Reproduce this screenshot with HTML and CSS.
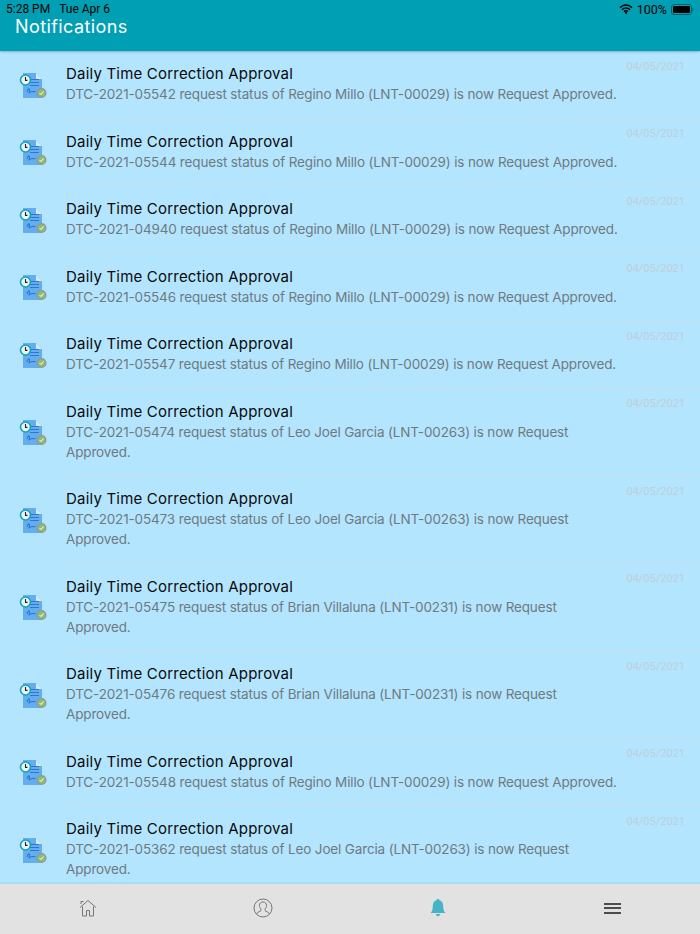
FILE: index.html
```html
<!DOCTYPE html>
<html lang="en">
<head>
  <meta charset="UTF-8">
  <meta name="viewport" content="width=device-width, initial-scale=1.0">
  <title>Notifications</title>
  <link rel="stylesheet" href="styles.css">
</head>
<body>
  <svg class="defs" width="0" height="0">
    <symbol id="doc-icon" viewBox="0 0 28 28">
      <path d="M4 2h13l6 6v19H4z" fill="#64aef0"/>
      <path d="M17 2l6 6h-6z" fill="#d6ecfb"/>
      <path d="M11 8.500h9M11 11.500h9M11 14.500h9" stroke="#2a78d0" stroke-width="1.200"/>
      <circle cx="6.500" cy="9" r="5" fill="#eef3f5" stroke="#12a3b8" stroke-width="1.600"/>
      <path d="M6.500 6v3.400h2" fill="none" stroke="#222" stroke-width="1.100"/>
      <path d="M8 21c1-4 3-4 2.500-1s-1 2 1 1 1 0 5-.5" fill="none" stroke="#2a78d0" stroke-width="1.100"/>
      <circle cx="22.500" cy="22" r="4.300" fill="#8fbf6a" stroke="#8f9a9e" stroke-width="1.500"/>
      <path d="M20.500 22l1.500 1.500 2.500-3" fill="none" stroke="#fff" stroke-width="1"/>
    </symbol>
  </svg>

  <div class="app">
    <header class="topbar">
      <div class="status">
        <span class="status-time">5:28 PM</span>
        <span class="status-date">Tue Apr 6</span>
        <span class="status-right">
          <svg width="14" height="10" viewBox="0 0 14 10">
            <path d="M1 3.600a8.500 8.500 0 0 1 12 0M3 5.700a5.600 5.600 0 0 1 8 0M5 7.600a2.800 2.800 0 0 1 4 0" fill="none" stroke="#000" stroke-width="1.500"/>
            <circle cx="7" cy="8.800" r="1.100" fill="#000"/>
          </svg>
          <span>100%</span>
          <svg width="23" height="11" viewBox="0 0 23 11">
            <rect x=".5" y=".5" width="20" height="10" rx="2.500" fill="none" stroke="#00606e"/>
            <rect x="2" y="2" width="17" height="7" rx="1.200" fill="#000"/>
            <path d="M21.500 3.800c.8.200 1 .8 1 1.700s-.2 1.500-1 1.700z" fill="#00606e"/>
          </svg>
        </span>
      </div>
      <h1>Notifications</h1>
    </header>

    <main class="list">
      <div class="row">
        <svg class="row-icon"><use href="#doc-icon"/></svg>
        <div class="row-text">
          <div class="row-title">Daily Time Correction Approval</div>
          <p class="row-body">DTC-2021-05542 request status of Regino Millo (LNT-00029) is now Request Approved.</p>
        </div>
        <div class="row-date">04/05/2021</div>
      </div>
      <div class="row">
        <svg class="row-icon"><use href="#doc-icon"/></svg>
        <div class="row-text">
          <div class="row-title">Daily Time Correction Approval</div>
          <p class="row-body">DTC-2021-05544 request status of Regino Millo (LNT-00029) is now Request Approved.</p>
        </div>
        <div class="row-date">04/05/2021</div>
      </div>
      <div class="row">
        <svg class="row-icon"><use href="#doc-icon"/></svg>
        <div class="row-text">
          <div class="row-title">Daily Time Correction Approval</div>
          <p class="row-body">DTC-2021-04940 request status of Regino Millo (LNT-00029) is now Request Approved.</p>
        </div>
        <div class="row-date">04/05/2021</div>
      </div>
      <div class="row">
        <svg class="row-icon"><use href="#doc-icon"/></svg>
        <div class="row-text">
          <div class="row-title">Daily Time Correction Approval</div>
          <p class="row-body">DTC-2021-05546 request status of Regino Millo (LNT-00029) is now Request Approved.</p>
        </div>
        <div class="row-date">04/05/2021</div>
      </div>
      <div class="row">
        <svg class="row-icon"><use href="#doc-icon"/></svg>
        <div class="row-text">
          <div class="row-title">Daily Time Correction Approval</div>
          <p class="row-body">DTC-2021-05547 request status of Regino Millo (LNT-00029) is now Request Approved.</p>
        </div>
        <div class="row-date">04/05/2021</div>
      </div>
      <div class="row">
        <svg class="row-icon"><use href="#doc-icon"/></svg>
        <div class="row-text">
          <div class="row-title">Daily Time Correction Approval</div>
          <p class="row-body">DTC-2021-05474 request status of Leo Joel Garcia (LNT-00263) is now Request Approved.</p>
        </div>
        <div class="row-date">04/05/2021</div>
      </div>
      <div class="row">
        <svg class="row-icon"><use href="#doc-icon"/></svg>
        <div class="row-text">
          <div class="row-title">Daily Time Correction Approval</div>
          <p class="row-body">DTC-2021-05473 request status of Leo Joel Garcia (LNT-00263) is now Request Approved.</p>
        </div>
        <div class="row-date">04/05/2021</div>
      </div>
      <div class="row">
        <svg class="row-icon"><use href="#doc-icon"/></svg>
        <div class="row-text">
          <div class="row-title">Daily Time Correction Approval</div>
          <p class="row-body">DTC-2021-05475 request status of Brian Villaluna (LNT-00231) is now Request Approved.</p>
        </div>
        <div class="row-date">04/05/2021</div>
      </div>
      <div class="row">
        <svg class="row-icon"><use href="#doc-icon"/></svg>
        <div class="row-text">
          <div class="row-title">Daily Time Correction Approval</div>
          <p class="row-body">DTC-2021-05476 request status of Brian Villaluna (LNT-00231) is now Request Approved.</p>
        </div>
        <div class="row-date">04/05/2021</div>
      </div>
      <div class="row">
        <svg class="row-icon"><use href="#doc-icon"/></svg>
        <div class="row-text">
          <div class="row-title">Daily Time Correction Approval</div>
          <p class="row-body">DTC-2021-05548 request status of Regino Millo (LNT-00029) is now Request Approved.</p>
        </div>
        <div class="row-date">04/05/2021</div>
      </div>
      <div class="row">
        <svg class="row-icon"><use href="#doc-icon"/></svg>
        <div class="row-text">
          <div class="row-title">Daily Time Correction Approval</div>
          <p class="row-body">DTC-2021-05362 request status of Leo Joel Garcia (LNT-00263) is now Request Approved.</p>
        </div>
        <div class="row-date">04/05/2021</div>
      </div>
    </main>

    <nav class="tabs">
      <div class="tab">
        <svg width="18" height="18" viewBox="0 0 18 18" fill="none" stroke="#777" stroke-width="1">
          <path d="M1 8.500L9 1.500l8 7M2 5V2.500h2.500M3.500 7.500V17h4v-5.500h3V17h4V7.500"/>
        </svg>
      </div>
      <div class="tab">
        <svg width="20" height="20" viewBox="0 0 20 20" fill="none" stroke="#777" stroke-width="1">
          <circle cx="10" cy="10" r="9"/>
          <path d="M3.500 16c.5-2 4-2.500 4.500-3.500v-1.500c-1-1-1.500-2-1.500-3.500 0-2.200 1.400-3.500 3.500-3.500s3.500 1.300 3.500 3.500c0 1.500-.5 2.500-1.500 3.500v1.500c.5 1 4 1.500 4.500 3.500"/>
        </svg>
      </div>
      <div class="tab">
        <svg width="16" height="18" viewBox="0 0 16 18">
          <path d="M8 0c1 0 1.300.6 1.400 1.300C12 2 13.200 4 13.200 7c0 3.500.6 5.600 2.300 7H.5c1.700-1.400 2.300-3.500 2.300-7 0-3 1.200-5 3.800-5.700C6.700.6 7 0 8 0z" fill="#46b3c6"/>
          <path d="M5.800 15h4.400c-.2 1.400-1 2.200-2.200 2.200s-2-.8-2.200-2.200z" fill="#46b3c6"/>
        </svg>
      </div>
      <div class="tab">
        <div class="burger"><i></i><i></i><i></i></div>
      </div>
    </nav>
  </div>
</body>
</html>
```

FILE: styles.css
```css
* {
  margin: 0;
  padding: 0;
  box-sizing: border-box;
}

body {
  font-family: 'Inter', 'Noto Sans', sans-serif;
  background: #b3e5ff;
}

.defs {
  display: block;
}

.app {
  height: 934px;
  display: flex;
  flex-direction: column;
  overflow: hidden;
}

.topbar {
  height: 51px;
  flex: none;
  background: #009fb3;
  box-shadow: 0 1px 2px rgba(0, 0, 0, 0.25);
  position: relative;
  z-index: 1;
}

.status {
  display: flex;
  align-items: center;
  height: 17px;
  padding: 1px 6px 0;
  font-family: 'Roboto', sans-serif;
  font-size: 12px;
  color: #000;
}

.status-date {
  margin-left: 9px;
}

.status-right {
  margin-left: auto;
  display: flex;
  align-items: center;
  gap: 4px;
  font-size: 12.500px;
}

h1 {
  font-size: 18px;
  font-weight: 400;
  color: #fff;
  line-height: 20px;
  padding-left: 15px;
  letter-spacing: 0.4px;
}

.list {
  flex: 1;
  overflow: hidden;
}

.row {
  display: flex;
  align-items: center;
  padding-left: 19px;
  position: relative;
}

.row-icon {
  width: 28px;
  height: 28px;
  flex: none;
  align-self: center;
}

.row-text {
  flex: 1;
  margin-left: 19px;
  padding: 12px 0 13.500px;
  border-bottom: 1px solid #c9dde9;
}

.row-title {
  font-size: 15px;
  line-height: 21px;
  color: #0a0a0a;
  letter-spacing: 0.2px;
}

.row-body {
  font-size: 13.500px;
  line-height: 20px;
  color: #6f7a80;
  padding-right: 80px;
  letter-spacing: -0.15px;
}

.row-date {
  position: absolute;
  top: 8.500px;
  right: 15px;
  font-family: 'Roboto', sans-serif;
  font-size: 11px;
  line-height: 14px;
  color: #bfced9;
}

.tabs {
  height: 52px;
  flex: none;
  display: flex;
  background: #e2e2e2;
  border-top: 2px solid #a9dbf5;
  position: relative;
}

.tab {
  flex: 1;
  display: flex;
  align-items: center;
  justify-content: center;
  padding-bottom: 2px;
}

.burger {
  width: 17px;
  display: flex;
  flex-direction: column;
  gap: 2.500px;
}

.burger i {
  display: block;
  height: 2px;
  background: #4d4d4d;
}
```
